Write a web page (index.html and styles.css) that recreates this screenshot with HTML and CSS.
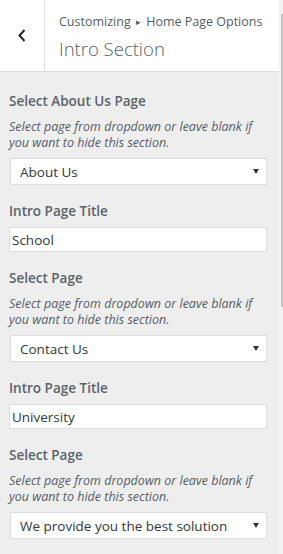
FILE: index.html
```html
<!DOCTYPE html>
<html lang="en">
<head>
<meta charset="utf-8">
<title>Customizing - Intro Section</title>
<link rel="stylesheet" href="styles.css">
</head>
<body>
<div id="wrap">
	<div class="panel">
		<div class="panel_head">
			<button class="back" type="button">
				<svg width="8" height="13" viewBox="0 0 8 13"><polyline points="6.5,1 1.5,6.5 6.5,12" fill="none" stroke="#23282d" stroke-width="2"/></svg>
			</button>
			<div class="head_title">
				<span class="crumb">Customizing <span class="sep">&#9656;</span> Home Page Options</span>
				<h3>Intro Section</h3>
			</div>
		</div>

		<ul class="controls">
			<li class="control">
				<span class="control_title">Select About Us Page</span>
				<span class="description">Select page from dropdown or leave blank if you want to hide this section.</span>
				<div class="select"><span>About Us</span><i class="arrow"></i></div>
			</li>
			<li class="control">
				<span class="control_title tight">Intro Page Title</span>
				<input class="text" type="text" value="School">
			</li>
			<li class="control">
				<span class="control_title">Select Page</span>
				<span class="description">Select page from dropdown or leave blank if you want to hide this section.</span>
				<div class="select"><span>Contact Us</span><i class="arrow"></i></div>
			</li>
			<li class="control">
				<span class="control_title tight">Intro Page Title</span>
				<input class="text" type="text" value="University">
			</li>
			<li class="control">
				<span class="control_title">Select Page</span>
				<span class="description">Select page from dropdown or leave blank if you want to hide this section.</span>
				<div class="select"><span>We provide you the best solution</span><i class="arrow"></i></div>
			</li>
		</ul>
	</div>
	<div class="scrollbar"><div class="thumb"></div></div>
</div>
</body>
</html>
```

FILE: styles.css
```css
html, body {
    margin: 0;
    padding: 0;
    height: 100%;
    overflow: hidden;
}

body {
    background-color: #eee;
    font-family: "Open Sans", "Noto Sans", sans-serif;
    color: #555d66;
}

#wrap {
    display: flex;
    height: 554px;
}

.panel {
    flex: 1;
    min-width: 0;
    background-color: #eee;
}

.panel_head {
    display: flex;
    height: 71px;
    background-color: #fff;
    border-bottom: 1px solid #ddd;
}

.back {
    width: 45px;
    height: 71px;
    padding: 0;
    border: 0;
    border-right: 1px solid #ddd;
    background: #fff;
    display: flex;
    align-items: center;
    justify-content: center;
}

.head_title {
    padding: 12px 0 0 14px;
}

.crumb {
    display: block;
    font-size: 12.5px;
    line-height: 20px;
    color: #555d66;
}

.sep {
    font-size: 9px;
    vertical-align: 1px;
    margin: 0 2px;
}

.head_title h3 {
    margin: 3px 0 0;
    font-size: 18.5px;
    font-weight: 300;
    line-height: 28px;
    color: #555d66;
}

.controls {
    list-style: none;
    margin: 0;
    padding: 17px 12px 0 9px;
}

.control {
    margin-bottom: 14px;
}

.control_title {
    display: block;
    font-size: 13.5px;
    font-weight: 600;
    line-height: 24px;
    margin-bottom: 6px;
    color: #5b636b;
}

.control_title.tight {
    margin-bottom: 4px;
}

.description {
    display: block;
    font-size: 12.5px;
    font-style: italic;
    line-height: 16px;
    margin-bottom: 7px;
}

.select {
    display: flex;
    align-items: center;
    justify-content: space-between;
    height: 25px;
    margin-left: 1px;
    padding: 0 7px 0 9px;
    background-color: #fff;
    border: 1px solid #ddd;
    font-size: 13.5px;
    color: #32373c;
}

.arrow {
    width: 0;
    height: 0;
    border-left: 3px solid transparent;
    border-right: 3px solid transparent;
    border-top: 5px solid #333;
}

.text {
    display: block;
    box-sizing: border-box;
    width: 100%;
    height: 25px;
    margin: 0;
    padding: 0 2px;
    background-color: #fff;
    border: 1px solid #ddd;
    font-family: "Open Sans", "Noto Sans", sans-serif;
    font-size: 13.5px;
    color: #32373c;
    outline: none;
}

.scrollbar {
    width: 4px;
    background-color: #f2f2f2;
    display: flex;
    justify-content: flex-end;
}

.thumb {
    width: 2px;
    height: 293px;
    margin-top: 14px;
    background-color: #c4c4c4;
}
```
